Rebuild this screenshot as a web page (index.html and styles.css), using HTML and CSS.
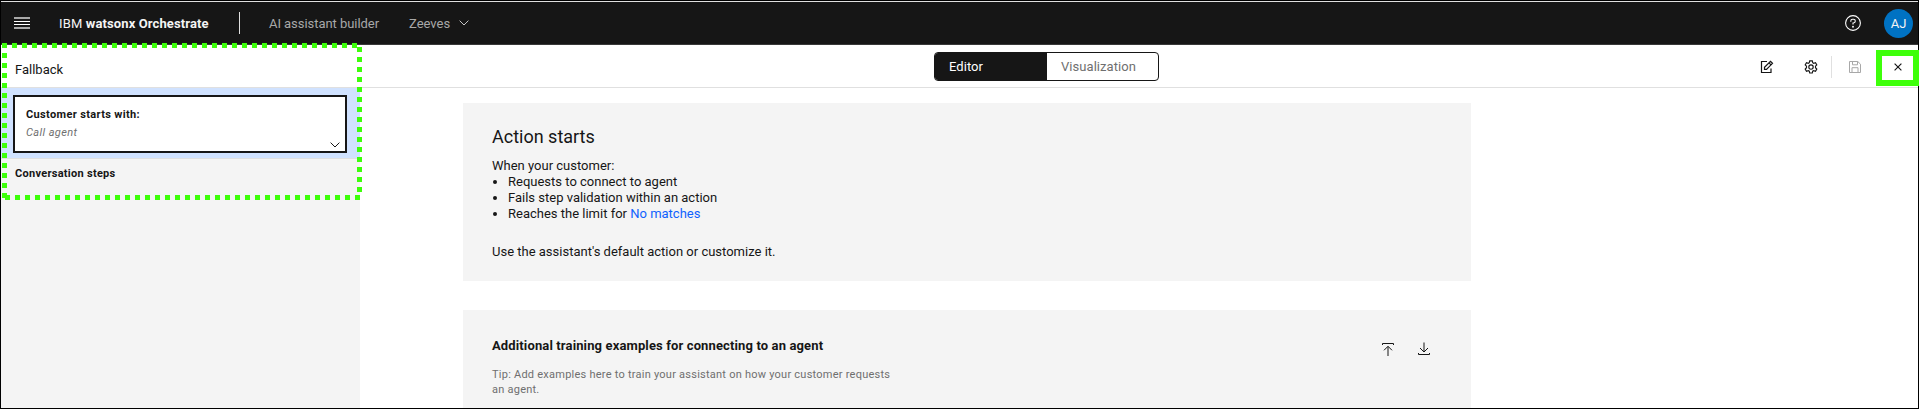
FILE: index.html
```html
<!DOCTYPE html>
<html lang="en">
<head>
<meta charset="utf-8">
<title>Fallback</title>
<link rel="stylesheet" href="styles.css">
</head>
<body>
<div class="app">
  <header class="header">
    <svg class="menu" width="16" height="12" viewBox="0 0 16 12"><path d="M0 1h16M0 11h16" stroke="#a8a8a8" stroke-width="2"/><path d="M0 4.500h16M0 7.500h16" stroke="#fff"/></svg>
    <span class="brand"><span class="ibm">IBM</span> <b>watsonx Orchestrate</b></span>
    <span class="rule"></span>
    <span class="product">AI assistant builder</span>
    <span class="tenant">Zeeves</span>
    <svg class="chev" width="10" height="6" viewBox="0 0 10 6" fill="none" stroke="#c6c6c6"><path d="M.6.6 5 5 9.400.6"/></svg>
    <svg class="help" width="16" height="16" viewBox="0 0 16 16" fill="none" stroke="#fff" stroke-width="1.1"><circle cx="8" cy="8" r="7.400"/><path d="M5.800 6.700V6a1.800 1.800 0 0 1 1.800-1.800h.8a1.900 1.900 0 0 1 0 3.800H8v1.600"/><circle cx="8" cy="11.700" r=".4"/></svg>
    <span class="avatar">AJ</span>
  </header>
  <div class="toolbar">
    <h1 class="name">Fallback</h1>
    <div class="switch"><span class="tab on">Editor</span><span class="tab">Visualization</span></div>
    <div class="tools">
      <svg width="14" height="14" viewBox="0 0 14 14" fill="none" stroke="#161616" stroke-width="1.2"><path d="M7 1.500H1.500v11H11V8.500"/><path d="M4.500 9.300v-2l6-6 2 2-6 6zM9 2.800l2 2"/></svg>
      <svg class="gear" width="14" height="14" viewBox="0 0 14 14" fill="none" stroke="#161616" stroke-width="1.15"><circle cx="7" cy="7" r="2.200"/><path d="M5.700.9h2.600l.4 1.800 1 .6 1.800-.6 1.300 2.200L11.500 6.200v1.500l1.300 1.300-1.300 2.200-1.800-.6-1 .6-.4 1.800H5.700l-.4-1.800-1-.6-1.800.6L1.200 9l1.300-1.300V6.200L1.200 4.900l1.300-2.200 1.800.6 1-.6z"/></svg>
      <span class="split"></span>
      <svg class="save" width="12" height="12" viewBox="0 0 12 12" fill="none" stroke="#a8a8a8"><path d="M.5.5h8.300l2.700 2.700v8.300H.5zM3.500.5v3.300h5V.5M3 11.500V6.700h6v4.800"/></svg>
      <svg class="close" width="8" height="8" viewBox="0 0 8 8" stroke="#161616" stroke-width="1.15"><path d="m.6.6 6.800 6.800M7.400.6.6 7.400"/></svg>
    </div>
  </div>
  <div class="body">
    <aside class="side">
      <div class="selected">
        <div class="step">
          <div class="stepname">Customer starts with:</div>
          <div class="phrase">Call agent</div>
          <svg class="open" width="10" height="6" viewBox="0 0 10 6" fill="none" stroke="#161616"><path d="M.6.6 5 5 9.400.6"/></svg>
        </div>
      </div>
      <h2 class="steps">Conversation steps</h2>
    </aside>
    <main class="main">
      <section class="card start">
        <h2 class="heading">Action starts</h2>
        <div class="copy">When your customer:</div>
        <ul class="list">
          <li>Requests to connect to agent</li>
          <li>Fails step validation within an action</li>
          <li>Reaches the limit for <a class="link">No matches</a></li>
        </ul>
        <div class="copy last">Use the assistant's default action or customize it.</div>
      </section>
      <section class="card training">
        <div>
          <h3 class="subhead">Additional training examples for connecting to an agent</h3>
          <p class="tip">Tip: Add examples here to train your assistant on how your customer requests<br>an agent.</p>
        </div>
        <div class="actions">
          <svg width="12" height="14" viewBox="0 0 12 14" fill="none" stroke="#161616"><path d="M.5 3V1.500h11V3M6 14V4.500M2 8.300l4-4 4 4"/></svg>
          <svg width="12" height="14" viewBox="0 0 12 14" fill="none" stroke="#161616"><path d="M.5 11v1.500h11V11M6 .5V10M2 6l4 4 4-4"/></svg>
        </div>
      </section>
    </main>
  </div>
</div>
<svg class="outline" width="362" height="160" viewBox="0 0 362 160" fill="none" stroke="#3dff0a" stroke-width="5" stroke-dasharray="5 5">
  <path d="M0 2.500H356M357.500 4V152M3 154.500H360M2.500 10V155"/>
</svg>
<div class="focus"></div>
</body>
</html>
```

FILE: styles.css
```css
* { box-sizing: border-box; }
body { margin: 0; font-family: Roboto, "Liberation Sans", sans-serif; color: #161616; background: #fff; font-size: 13px; }
h1, h2, h3, p, ul { margin: 0; padding: 0; font-weight: 400; }
svg { display: block; flex: none; }
.app { width: 1919px; height: 409px; border: 1px solid #000; overflow: hidden; display: flex; flex-direction: column; }
.header { height: 44px; flex: none; background: #161616; border-top: 1px solid #e0e0e0; border-bottom: 1px solid #393939; display: flex; align-items: center; padding: 0 5px 0 13px; color: #f4f4f4; white-space: nowrap; }
.brand { margin-left: 29px; width: 180px; letter-spacing: .12px; }
.brand b { font-weight: 700; }
.rule { width: 1px; height: 22px; background: #e0e0e0; }
.product { margin-left: 29px; width: 140px; color: #a8a8a8; letter-spacing: -.05px; }
.tenant { width: 50px; color: #a8a8a8; }
.help { margin-left: auto; }
.avatar { margin-left: 23px; width: 29px; height: 29px; border-radius: 50%; background: #0072c3; display: flex; align-items: center; justify-content: center; }
.toolbar { height: 43px; flex: none; border-bottom: 1px solid #e0e0e0; display: flex; align-items: flex-start; padding-left: 14px; }
.name { width: 919px; font-size: 13px; line-height: 16px; margin-top: 17px; }
.switch { width: 225px; height: 29px; margin-top: 7px; border: 1px solid #161616; border-radius: 4px; display: flex; overflow: hidden; letter-spacing: .05px; line-height: 28px; }
.tab { flex: 1; padding-left: 14px; color: #6f6f6f; }
.tab.on { flex: 0 0 112px; background: #161616; color: #fff; }
.tools { margin-left: auto; margin-right: 16px; height: 44px; display: flex; align-items: center; }
.gear { margin-left: 30px; }
.split { width: 1px; height: 22px; background: #e0e0e0; margin-left: 13px; }
.save { margin-left: 17px; }
.close { margin-left: 33px; }
.body { flex: 1; display: flex; min-height: 0; }
.side { width: 359px; background: #f4f4f4; }
.selected { height: 71px; background: #d0e2ff; border-bottom: 1px solid #e0e0e0; padding: 7px 13px 0 12px; }
.step { height: 58px; border: 2px solid #161616; background: #fff; padding: 9px 5px 0 11px; font-size: 11px; }
.stepname { font-weight: 700; line-height: 18px; letter-spacing: .35px; }
.phrase { font-style: italic; color: #6f6f6f; line-height: 18px; letter-spacing: .4px; }
.open { margin: 0 0 0 auto; }
.steps { font-size: 11px; font-weight: 700; line-height: 16px; margin: 7px 0 0 14px; letter-spacing: .28px; }
.main { flex: 1; padding: 15px 0 0 103px; }
.card { width: 1008px; background: #f4f4f4; padding: 0 29px; white-space: nowrap; }
.start { height: 178px; padding-top: 22px; }
.heading { font-size: 18px; line-height: 24px; }
.copy { line-height: 16px; margin-top: 9px; }
.list { padding-left: 16px; line-height: 16px; }
.last { margin-top: 22px; }
.link { color: #0f62fe; }
.training { margin-top: 29px; height: 120px; display: flex; justify-content: space-between; padding: 27px 41px 0 29px; }
.subhead { font-size: 13px; font-weight: 700; line-height: 18px; letter-spacing: .13px; }
.tip { font-size: 11px; line-height: 15px; color: #6f6f6f; margin-top: 12px; letter-spacing: .24px; }
.actions { display: flex; gap: 24px; padding-top: 5px; }
.outline { position: absolute; left: 2px; top: 43px; }
.focus { position: absolute; left: 1876px; top: 50px; width: 43px; height: 36px; border: 6px solid #3dff0a; }
```
